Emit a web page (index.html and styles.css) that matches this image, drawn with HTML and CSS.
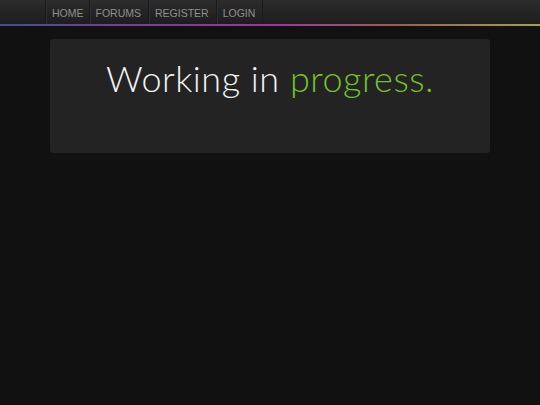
FILE: index.html
```html
<!DOCTYPE html>
<html>
<head>
<meta charset="utf-8">
<link rel="stylesheet" href="styles.css">
</head>
<body>
<div class="navbar">
  <div class="container">
    <ul class="nav">
      <li><a href="#" class="first">HOME</a></li>
      <li><a href="#">FORUMS</a></li>
      <li><a href="#">REGISTER</a></li>
      <li><a href="#">LOGIN</a></li>
    </ul>
  </div>
</div>
<div class="rainbow"></div>
<div class="container main">
  <div class="panel">
    <h1 class="title">Working in <span class="accent">progress.</span></h1>
  </div>
</div>
</body>
</html>
```
FILE: styles.css
```css
html, body {
  margin: 0;
  padding: 0;
  background: #111111;
  height: 100%;
}
body {
  font-family: "Liberation Sans", Arial, sans-serif;
}
.navbar {
  height: 24px;
  background: linear-gradient(to bottom, #2c2c2c 0%, #1d1d1d 100%);
}
.container {
  width: 450px;
  margin: 0 auto;
}
.nav {
  list-style: none;
  margin: 0;
  padding: 0;
  display: flex;
  height: 24px;
}
.nav li {
  border-left: 1px solid #1a1a1a;
  box-shadow: inset 1px 0 0 #2e2e2e;
  display: flex;
}
.nav li:last-child {
  border-right: 1px solid #1a1a1a;
}
.nav a {
  display: block;
  padding: 0 7px 0 6px;
  line-height: 27px;
  font-size: 10.5px;
  color: #8f8f8f;
  text-decoration: none;
}
.nav a.first {
  padding-right: 5px;
}
.rainbow {
  height: 2px;
  background: linear-gradient(to right, #3e4f96 0%, #7a3ba4 25%, #a230a6 50%, #a0604a 75%, #a3a444 100%);
}
.main {
  padding: 13px 5px 0;
  box-sizing: border-box;
}
.panel {
  background: #232323;
  border-radius: 3px;
  height: 114px;
  box-sizing: border-box;
  padding-top: 17px;
}
.title {
  margin: 0;
  text-align: center;
  font-family: Lato, "Open Sans", sans-serif;
  font-weight: 300;
  font-size: 36px;
  letter-spacing: 0.5px;
  line-height: 44px;
  color: #f2f2f2;
}
.accent {
  color: #74c12a;
}
```
